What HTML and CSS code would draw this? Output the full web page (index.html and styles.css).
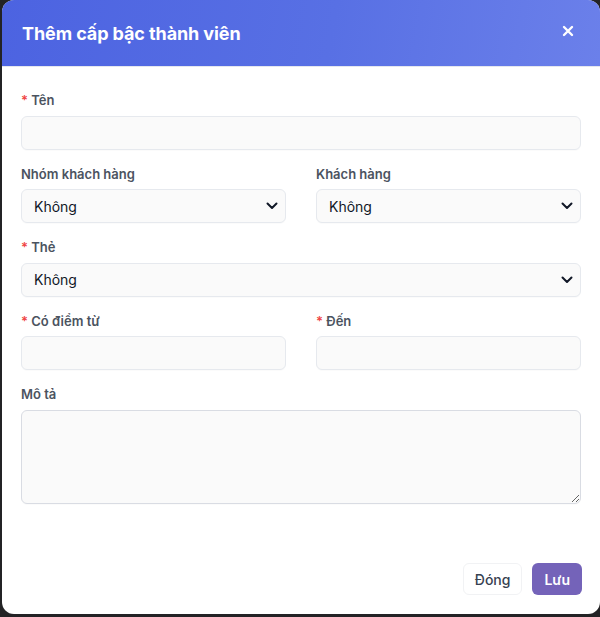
FILE: index.html
```html
<!DOCTYPE html>
<html lang="vi">
<head>
<meta charset="utf-8">
<link rel="stylesheet" href="styles.css">
</head>
<body>
<div class="modal">
  <div class="modal-header">
    <h2 class="modal-title">Thêm cấp bậc thành viên</h2>
    <button class="close-btn" aria-label="Đóng">
      <svg width="12" height="12" viewBox="0 0 12 12"><path d="M2 2L10 10M10 2L2 10" stroke="#fff" stroke-width="2.4" stroke-linecap="round"/></svg>
    </button>
  </div>
  <div class="modal-body">
    <div class="field">
      <label class="label"><span class="req">*</span> Tên</label>
      <input class="input" type="text">
    </div>
    <div class="row">
      <div class="field">
        <label class="label">Nhóm khách hàng</label>
        <select class="input select"><option>Không</option></select>
      </div>
      <div class="field">
        <label class="label">Khách hàng</label>
        <select class="input select"><option>Không</option></select>
      </div>
    </div>
    <div class="field">
      <label class="label"><span class="req">*</span> Thẻ</label>
      <select class="input select"><option>Không</option></select>
    </div>
    <div class="row">
      <div class="field">
        <label class="label"><span class="req">*</span> Có điểm từ</label>
        <input class="input" type="text">
      </div>
      <div class="field">
        <label class="label"><span class="req">*</span> Đến</label>
        <input class="input" type="text">
      </div>
    </div>
    <div class="field">
      <label class="label">Mô tả</label>
      <textarea class="input textarea"></textarea>
    </div>
  </div>
  <div class="modal-footer">
    <button class="btn btn-light">Đóng</button>
    <button class="btn btn-primary">Lưu</button>
  </div>
</div>
</body>
</html>
```
FILE: styles.css
```css
* { box-sizing: border-box; }
html, body { margin: 0; padding: 0; }
body {
  background: #232325;
  width: 600px;
  height: 617px;
  overflow: hidden;
  font-family: Inter, "Noto Sans", sans-serif;
}
.modal {
  margin-left: 2px;
  width: 598px;
  height: 614px;
  background: #fff;
  border-radius: 12px;
  overflow: hidden;
  display: flex;
  flex-direction: column;
}
.modal-header {
  height: 67px;
  background: linear-gradient(100deg, #4c63e1 0%, #5870e4 55%, #6b80ea 100%);
  border-bottom: 1px solid #e4e7ee;
  display: flex;
  align-items: center;
  justify-content: space-between;
  padding: 0 22px 0 20px;
}
.modal-title {
  margin: 0;
  color: #fff;
  font-size: 18px;
  font-weight: 700;
  letter-spacing: -0.1px;
}
.close-btn {
  background: none;
  border: none;
  padding: 0;
  width: 12px;
  height: 12px;
  display: flex;
  margin-top: -4px;
  margin-right: 4px;
  cursor: pointer;
}
.modal-body {
  padding: 24px 19px 0 19px;
  display: flex;
  flex-direction: column;
  gap: 15px;
  flex: 1;
}
.row {
  display: grid;
  grid-template-columns: 1fr 1fr;
  gap: 30px;
}
.field {
  display: flex;
  flex-direction: column;
  gap: 6.5px;
}
.label {
  font-size: 13px;
  line-height: 18px;
  font-weight: 600;
  color: #4b5360;
}
.req { color: #ef4444; }
.input {
  height: 34px;
  min-height: 34px;
  width: 100%;
  background-color: #fafafa;
  border: 1px solid #e6e9ee;
  border-radius: 6px;
  font-family: Inter, "Noto Sans", sans-serif;
  font-size: 14px;
  color: #111827;
  padding: 0 12px;
  outline: none;
  box-shadow: 0 1px 1px rgba(0,0,0,0.02);
}
.select {
  appearance: none;
  -webkit-appearance: none;
  background-image: url("data:image/svg+xml;utf8,<svg xmlns='http://www.w3.org/2000/svg' width='12' height='8' viewBox='0 0 12 8'><path d='M1.5 1.5L6 6L10.5 1.5' fill='none' stroke='%23111827' stroke-width='2' stroke-linecap='round' stroke-linejoin='round'/></svg>");
  background-repeat: no-repeat;
  background-position: right 7px center;
  background-size: 12px 8px;
}
.textarea {
  height: 94px;
  resize: vertical;
  padding: 8px 12px;
  border-color: #d9dce3;
}
.modal-footer {
  display: flex;
  justify-content: flex-end;
  gap: 10px;
  padding: 0 18px 19px 0;
}
.btn {
  height: 32px;
  border-radius: 6px;
  font-family: Inter, "Noto Sans", sans-serif;
  font-size: 14px;
  font-weight: 600;
  cursor: pointer;
}
.btn-light {
  background: #fff;
  border: 1px solid #f1f2f4;
  color: #374151;
  padding: 0 11px;
  font-weight: 500;
}
.btn-primary {
  background: #7463b9;
  border: none;
  color: #fff;
  padding: 0 12px;
}
```
